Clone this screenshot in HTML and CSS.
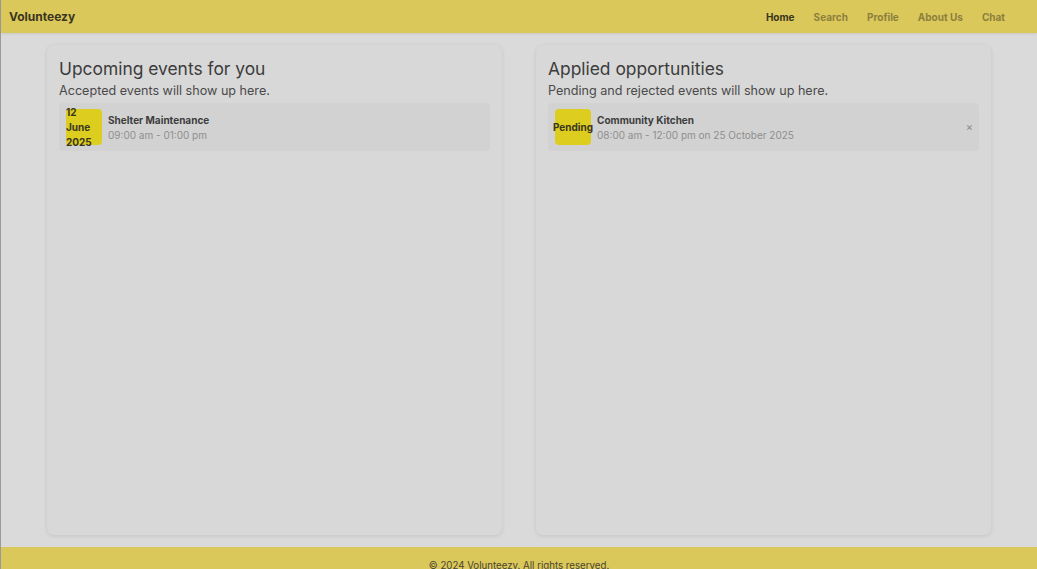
FILE: index.html
```html
<!DOCTYPE html>
<html lang="en">
<head>
<meta charset="utf-8">
<title>Volunteezy</title>
<link rel="stylesheet" href="styles.css">
</head>
<body>
<div class="page">
  <header class="topbar">
    <div class="logo">Volunteezy</div>
    <nav class="nav">
      <a class="nav-link active">Home</a>
      <a class="nav-link">Search</a>
      <a class="nav-link">Profile</a>
      <a class="nav-link">About Us</a>
      <a class="nav-link">Chat</a>
    </nav>
  </header>
  <main class="main">
    <section class="card">
      <h2 class="card-title">Upcoming events for you</h2>
      <p class="card-sub">Accepted events will show up here.</p>
      <div class="item">
        <div class="badge badge-date"><span>12 June 2025</span></div>
        <div class="item-text">
          <div class="item-name">Shelter Maintenance</div>
          <div class="item-time">09:00 am - 01:00 pm</div>
        </div>
      </div>
    </section>
    <section class="card">
      <h2 class="card-title">Applied opportunities</h2>
      <p class="card-sub">Pending and rejected events will show up here.</p>
      <div class="item">
        <div class="badge"><span>Pending</span></div>
        <div class="item-text">
          <div class="item-name">Community Kitchen</div>
          <div class="item-time">08:00 am - 12:00 pm on 25 October 2025</div>
        </div>
        <span class="close">×</span>
      </div>
    </section>
  </main>
  <footer class="footer">© 2024 Volunteezy. All rights reserved.</footer>
</div>
</body>
</html>
```
FILE: styles.css
```css
* { box-sizing: border-box; }
html, body { margin: 0; padding: 0; }
body {
  font-family: Inter, "Noto Sans", "Liberation Sans", sans-serif;
  background: #dadada;
  color: #3a3a3a;
}
.page {
  border-left: 1px solid #9a9a9a;
}
.topbar {
  height: 33px;
  background: #dbc85a;
  display: flex;
  align-items: center;
  justify-content: space-between;
  padding: 0 32px 0 8px;
  box-shadow: 0 1px 2px rgba(0,0,0,0.08);
}
.logo {
  font-size: 12px;
  font-weight: 700;
  color: #3a3520;
}
.nav {
  display: flex;
  gap: 19px;
}
.nav-link {
  font-size: 10px;
  font-weight: 700;
  color: #8c7f3e;
}
.nav-link.active { color: #3a3520; }
.main {
  display: grid;
  grid-template-columns: 455px 455px;
  justify-content: center;
  gap: 34px;
  padding: 12px 0;
}
.card {
  height: 490px;
  background: #d8d8d8;
  border-radius: 7px;
  box-shadow: 0 1px 4px rgba(0,0,0,0.1);
  padding: 12px 12px;
}
.card-title {
  margin: 0;
  font-size: 17.4px;
  font-weight: 400;
  line-height: 23px;
  color: #3c3c3c;
}
.card-sub {
  margin: 0;
  font-size: 12.6px;
  line-height: 21px;
  color: #4a4a4a;
}
.item {
  margin-top: 2px;
  height: 48px;
  background: #d2d2d2;
  border-radius: 4px;
  display: flex;
  align-items: center;
  gap: 6px;
  padding: 0 6px 0 7px;
}
.badge {
  flex: 0 0 36px;
  width: 36px;
  height: 36px;
  background: #dccd1e;
  border-radius: 4px;
  display: flex;
  align-items: center;
  justify-content: center;
  font-size: 10px;
  font-weight: 700;
  color: #3a3520;
  line-height: 15px;
}
.badge-date { justify-content: flex-start; }
.badge-date span { width: 36px; }
.item-text {
  flex: 1;
  display: flex;
  flex-direction: column;
  gap: 1px;
}
.item-name {
  font-size: 10px;
  font-weight: 700;
  line-height: 14px;
  color: #3d3d3d;
}
.item-time {
  font-size: 10px;
  line-height: 14px;
  color: #8e8e8e;
}
.close {
  font-size: 11px;
  color: #8a8a8a;
}
.footer {
  background: #dbc85a;
  height: 40px;
  padding-top: 13px;
  text-align: center;
  font-size: 9.7px;
  color: #4a4530;
}
```
